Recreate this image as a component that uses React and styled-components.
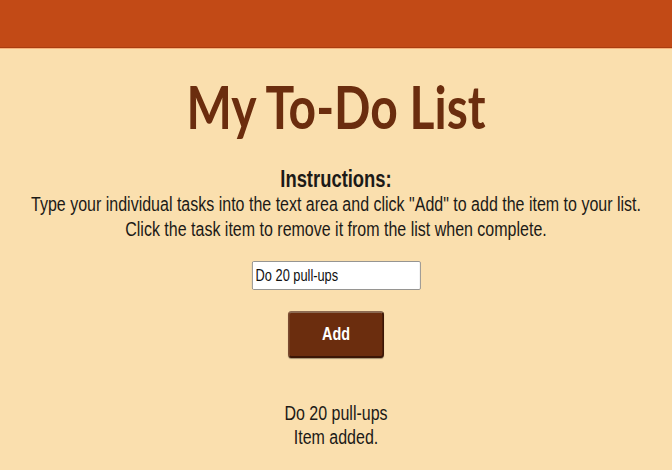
import styled, { createGlobalStyle } from 'styled-components';

// the reference is horizontally squeezed, so the content is laid out at
// full width and condensed by this factor
const SQUEEZE = 0.8;

const GlobalStyle = createGlobalStyle`
  html, body {
    margin: 0;
    padding: 0;
    background: #fadfae;
    overflow: hidden;
  }
`;

const Page = styled.div`
  min-height: 470px;
  background: #fadfae;
  overflow: hidden;
  font-family: 'Liberation Sans', Arial, sans-serif;
  color: #1c1a17;
`;

const TopBar = styled.header`
  height: 47px;
  background: #c24a16;
  border-bottom: 1px solid #a93d10;
  box-shadow: 0 1px 0 #f7b27a;
`;

const Main = styled.main`
  width: ${672 / SQUEEZE}px;
  transform: scaleX(${SQUEEZE});
  transform-origin: left top;
  display: flex;
  flex-direction: column;
  align-items: center;
  text-align: center;
`;

const Title = styled.h1`
  margin: 22px 0 0;
  font-family: Lato, sans-serif;
  font-weight: 700;
  font-size: 60px;
  line-height: 72px;
  color: #6b2d0e;
`;

const Instructions = styled.section`
  margin-top: 24px;
  font-size: 20px;
  line-height: 25px;
  white-space: nowrap;
`;

const InstructionsHeading = styled.h2`
  margin: 0;
  font-size: 23px;
  line-height: 26px;
  font-weight: 700;
`;

const TaskInput = styled.input`
  margin-top: 19px;
  width: 211px;
  height: 29px;
  box-sizing: border-box;
  padding: 0 4px;
  border: 1px solid #8a8a8a;
  border-radius: 2px;
  background: #fff;
  font-family: inherit;
  font-size: 16px;
  color: #111;
  outline: none;
`;

const AddButton = styled.button`
  margin-top: 21px;
  width: 120px;
  height: 47px;
  background: #6b2d0e;
  border: 2px solid #3b1606;
  border-top-color: #8c6a52;
  border-left-color: #7a4a30;
  border-radius: 4px;
  box-shadow: 0 1px 1px rgba(0, 0, 0, 0.35);
  color: #fff;
  font-family: 'Liberation Sans', Arial, sans-serif;
  font-weight: 700;
  font-size: 18px;
  cursor: pointer;
`;

const Output = styled.div`
  margin-top: 43px;
  font-size: 20px;
  line-height: 24px;
`;

export default function App() {
  return (
    <>
      <GlobalStyle />
      <Page>
        <TopBar />
        <Main>
          <Title>My To-Do List</Title>
          <Instructions>
            <InstructionsHeading>Instructions:</InstructionsHeading>
            <div>
              Type your individual tasks into the text area and click "Add" to add the item to your list.
            </div>
            <div>Click the task item to remove it from the list when complete.</div>
          </Instructions>
          <TaskInput defaultValue="Do 20 pull-ups" />
          <AddButton>Add</AddButton>
          <Output>
            <div>Do 20 pull-ups</div>
            <div>Item added.</div>
          </Output>
        </Main>
      </Page>
    </>
  );
}
